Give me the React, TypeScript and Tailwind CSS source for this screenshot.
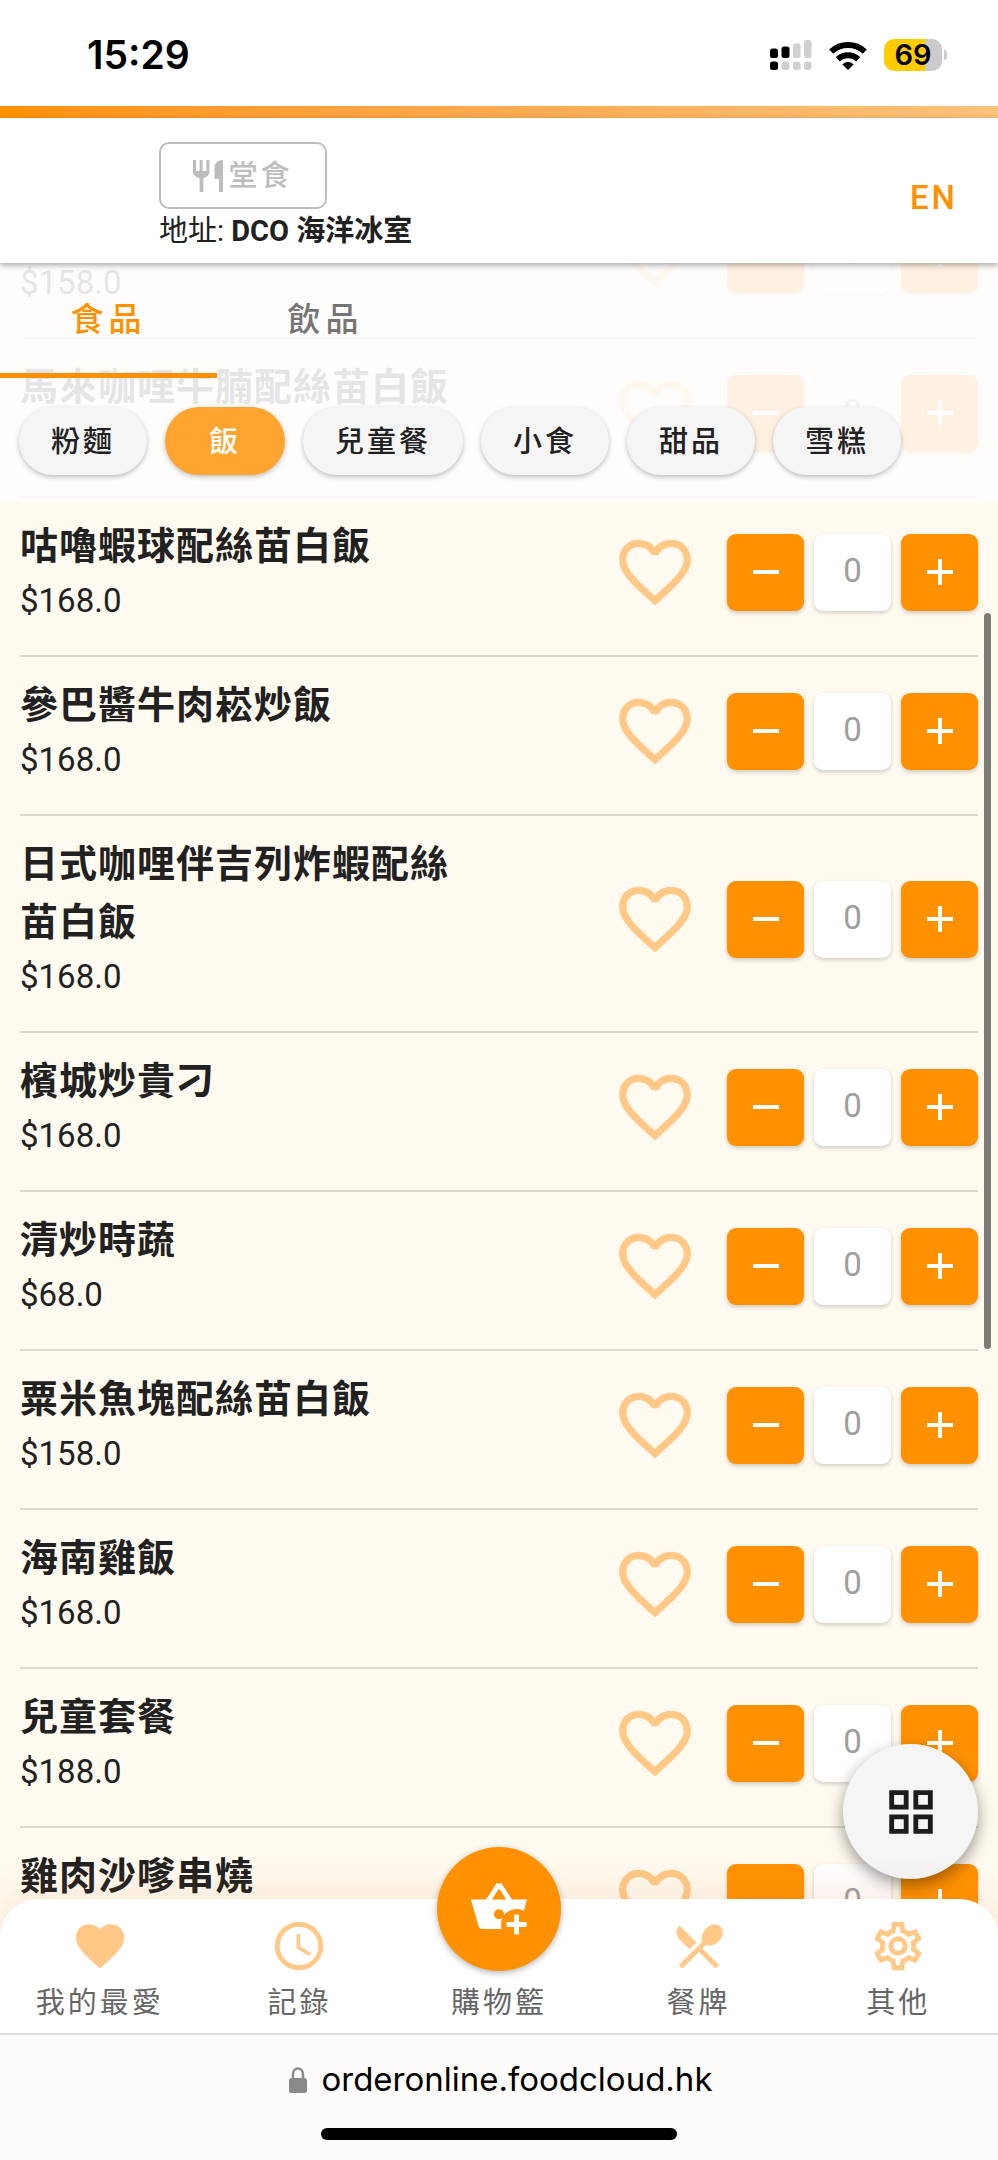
import { useLayoutEffect, useRef, useState } from 'react';

interface Dish {
    name: string;
    price: string;
}

const dishes: Dish[] = [
    { name: '沙嗲雞肉配絲苗白飯', price: '$158.0' },
    { name: '馬來咖哩牛腩配絲苗白飯', price: '$168.0' },
    { name: '咕嚕蝦球配絲苗白飯', price: '$168.0' },
    { name: '參巴醬牛肉崧炒飯', price: '$168.0' },
    { name: '日式咖哩伴吉列炸蝦配絲苗白飯', price: '$168.0' },
    { name: '檳城炒貴刁', price: '$168.0' },
    { name: '清炒時蔬', price: '$68.0' },
    { name: '粟米魚塊配絲苗白飯', price: '$158.0' },
    { name: '海南雞飯', price: '$168.0' },
    { name: '兒童套餐', price: '$188.0' },
    { name: '雞肉沙嗲串燒', price: '$88.0' },
];

const tabs = ['食品', '飲品'];
const categories = ['粉麵', '飯', '兒童餐', '小食', '甜品', '雪糕'];

const paths = {
    heart: 'M12,21.35L10.55,20.03C5.4,15.36 2,12.27 2,8.5C2,5.41 4.42,3 7.5,3C9.24,3 10.91,3.81 12,5.08C13.09,3.81 14.76,3 16.5,3C19.58,3 22,5.41 22,8.5C22,12.27 18.6,15.36 13.45,20.03L12,21.35Z',
    heartOutline:
        'M12.1,18.55L12,18.65L11.89,18.55C7.14,14.24 4,11.39 4,8.5C4,6.5 5.5,5 7.5,5C9.04,5 10.54,6 11.07,7.36H12.93C13.46,6 14.96,5 16.5,5C18.5,5 20,6.5 20,8.5C20,11.39 16.86,14.24 12.1,18.55M16.5,3C14.76,3 13.09,3.81 12,5.08C10.91,3.81 9.24,3 7.5,3C4.42,3 2,5.41 2,8.5C2,12.27 5.4,15.36 10.55,20.03L12,21.35L13.45,20.03C18.6,15.36 22,12.27 22,8.5C22,5.41 19.58,3 16.5,3Z',
    clock: 'M12,20A8,8 0 0,0 20,12A8,8 0 0,0 12,4A8,8 0 0,0 4,12A8,8 0 0,0 12,20M12,2A10,10 0 0,1 22,12A10,10 0 0,1 12,22C6.47,22 2,17.5 2,12A10,10 0 0,1 12,2M12.5,7V12.25L17,14.92L16.25,16.15L11,13V7H12.5Z',
    silverware:
        'M8.1,13.34L10.93,10.5L3.91,3.5C2.35,5.06 2.35,7.59 3.91,9.16L8.1,13.34M14.88,11.53C16.41,12.24 18.56,11.74 20.15,10.15C22.06,8.24 22.42,5.5 20.96,4.04C19.5,2.58 16.76,2.94 14.85,4.85C13.26,6.44 12.76,8.59 13.47,10.12L3.7,19.88L5.11,21.29L12,14.41L18.88,21.29L20.29,19.88L13.41,13L14.88,11.53Z',
    cog: 'M12,8A4,4 0 0,1 16,12A4,4 0 0,1 12,16A4,4 0 0,1 8,12A4,4 0 0,1 12,8M12,10A2,2 0 0,0 10,12A2,2 0 0,0 12,14A2,2 0 0,0 14,12A2,2 0 0,0 12,10M10,22C9.75,22 9.54,21.82 9.5,21.58L9.13,18.93C8.5,18.68 7.96,18.34 7.44,17.94L4.95,18.95C4.73,19.03 4.46,18.95 4.34,18.73L2.34,15.27C2.21,15.05 2.27,14.78 2.46,14.63L4.57,12.97L4.5,12L4.57,11L2.46,9.37C2.27,9.22 2.21,8.95 2.34,8.73L4.34,5.27C4.46,5.05 4.73,4.96 4.95,5.05L7.44,6.05C7.96,5.66 8.5,5.32 9.13,5.07L9.5,2.42C9.54,2.18 9.75,2 10,2H14C14.25,2 14.46,2.18 14.5,2.42L14.87,5.07C15.5,5.32 16.04,5.66 16.56,6.05L19.05,5.05C19.27,4.96 19.54,5.05 19.66,5.27L21.66,8.73C21.79,8.95 21.73,9.22 21.54,9.37L19.43,11L19.5,12L19.43,13L21.54,14.63C21.73,14.78 21.79,15.05 21.66,15.27L19.66,18.73C19.54,18.95 19.27,19.04 19.05,18.95L16.56,17.95C16.04,18.34 15.5,18.68 14.87,18.93L14.5,21.58C14.46,21.82 14.25,22 14,22H10M11.25,4L10.88,6.61C9.68,6.86 8.62,7.5 7.85,8.39L5.44,7.35L4.69,8.65L6.8,10.2C6.4,11.37 6.4,12.64 6.8,13.8L4.68,15.36L5.43,16.66L7.86,15.62C8.63,16.5 9.68,17.14 10.87,17.38L11.24,20H12.76L13.13,17.39C14.32,17.14 15.37,16.5 16.14,15.62L18.57,16.66L19.32,15.36L17.2,13.81C17.6,12.64 17.6,11.37 17.2,10.2L19.31,8.65L18.56,7.35L16.15,8.39C15.38,7.5 14.32,6.86 13.12,6.62L12.75,4H11.25Z',
    grid: 'M3 11H11V3H3M5 5H9V9H5M13 21H21V13H13M15 15H19V19H15M3 21H11V13H3M5 15H9V19H5M13 3V11H21V3M19 9H15V5H19Z',
};

function Icon({ path, className }: { path: string; className: string }) {
    return (
        <svg viewBox="0 0 24 24" fill="currentColor" fillRule="evenodd" className={className} aria-hidden="true">
            <path d={path} />
        </svg>
    );
}

function StatusBar() {
    return (
        <div className="flex h-[106px] shrink-0 items-center justify-between bg-white pl-[87px] pr-[51px] pt-1">
            <span className="font-['Inter'] text-[39px] font-semibold text-black">15:29</span>
            <div className="flex items-center gap-[17px]">
                <svg viewBox="0 0 42 30" className="h-[30px] w-[42px]" aria-label="訊號">
                    <g fill="#000">
                        <rect x="0" y="8.5" width="8" height="9.5" rx="2.5" />
                        <rect x="11.5" y="6.5" width="8" height="11.5" rx="2.5" />
                        <rect x="0" y="21.5" width="8" height="8.5" rx="2.5" />
                    </g>
                    <g fill="#d0d0d0">
                        <rect x="23" y="3.5" width="7.5" height="14.5" rx="2.5" />
                        <rect x="34" y="0" width="7.5" height="18" rx="2.5" />
                        <rect x="11.5" y="21.5" width="8" height="8.5" rx="3" />
                        <rect x="23" y="21.5" width="7.5" height="8.5" rx="3" />
                        <rect x="34" y="21.5" width="7.5" height="8.5" rx="3" />
                    </g>
                </svg>
                <svg viewBox="0 0 38 29" className="h-[29px] w-[38px]" fill="none" stroke="#000" strokeWidth="6" aria-label="Wi-Fi">
                    <path d="M2.2 10.6a24.5 24.5 0 0 1 33.6 0" />
                    <path d="M8.8 18.2a15 15 0 0 1 20.4 0" />
                    <path d="M19 29l-5.6-5.6a8 8 0 0 1 11.2 0z" fill="#000" stroke="none" />
                </svg>
                <div className="flex items-center gap-[2px]">
                    <div className="flex h-8 w-[58px] items-center justify-center rounded-[10px] bg-linear-to-r from-[#ffcc00] from-70% to-[#cbcbcb] to-70% font-['Inter'] text-[29px] font-semibold text-black">
                        69
                    </div>
                    <div className="h-[10px] w-[3px] rounded-r-full bg-[#cbcbcb]" />
                </div>
            </div>
        </div>
    );
}

function Header() {
    return (
        <header className="relative z-20 flex shrink-0 items-center justify-between bg-white pb-[10px] pl-[159px] pr-10 pt-6 shadow-[0_2px_6px_rgba(0,0,0,0.35)]">
            <div>
                <button
                    type="button"
                    className="flex h-[67px] w-[168px] items-center justify-center gap-[5px] rounded-[10px] border-2 border-[#bdbdbd] text-[29px] font-medium leading-[42px] tracking-[3px] text-[#bdbdbd]"
                >
                    <svg viewBox="0 0 30 32" fill="currentColor" className="h-8 w-[30px]" aria-hidden="true">
                        <path d="M0 0h3v11h3.6V0h3v11h3.8V0h3v11c0 4-2.4 6.200-6 7v14H6.600V18C2.600 17.200 0 15 0 11z" />
                        <path d="M30 0v32h-4V19h-4.500V8c0-4.500 3-8 8.500-8z" />
                    </svg>
                    堂食
                </button>
                <p className="text-[29px] leading-[44px] text-[#212121]">
                    地址: <strong className="font-bold">DCO 海洋冰室</strong>
                </p>
            </div>
            <button type="button" className="text-[33px] font-medium tracking-[3px] text-[#ff9100]">
                EN
            </button>
        </header>
    );
}

function DishRow({ dish }: { dish: Dish }) {
    const [qty, setQty] = useState(0);
    const stepButton =
        'flex size-[77px] items-center justify-center rounded-[9px] bg-[#ff9100] text-white shadow-[0_2px_4px_rgba(0,0,0,0.2)]';

    return (
        <li className="flex items-center border-b-2 border-[#ded9cf] pb-7 pt-[19px]">
            <div className="flex-1 pr-36 text-[#212121]">
                <h3 className="text-[38px] font-bold leading-[58px] tracking-[1px]">{dish.name}</h3>
                <p className="text-[33px] leading-[52px]">{dish.price}</p>
            </div>
            <button type="button" aria-label={`收藏 ${dish.name}`} className="mr-[29px] text-[#ffc886]">
                <Icon path={paths.heartOutline} className="size-[86px]" />
            </button>
            <div className="flex gap-[10px]">
                <button type="button" aria-label="減少" onClick={() => setQty(Math.max(0, qty - 1))} className={stepButton}>
                    <svg viewBox="0 0 26 26" stroke="currentColor" strokeWidth="4" className="size-[26px]">
                        <path d="M0 13h26" />
                    </svg>
                </button>
                <input
                    type="text"
                    aria-label={`${dish.name} 數量`}
                    value={qty}
                    readOnly
                    className="size-[77px] rounded-[9px] bg-white pb-1 text-center text-[33px] text-[#9e9e9e] shadow-[0_2px_4px_rgba(0,0,0,0.18)] outline-none"
                />
                <button type="button" aria-label="增加" onClick={() => setQty(qty + 1)} className={stepButton}>
                    <svg viewBox="0 0 26 26" stroke="currentColor" strokeWidth="4" className="size-[26px]">
                        <path d="M0 13h26M13 0v26" />
                    </svg>
                </button>
            </div>
        </li>
    );
}

function MenuFilters() {
    const [tab, setTab] = useState('食品');
    const [category, setCategory] = useState('飯');

    return (
        <div className="absolute inset-x-0 top-0 z-10 bg-[#fffdfd]/89 pb-7">
            <div className="flex">
                {tabs.map((t) => (
                    <button
                        key={t}
                        type="button"
                        onClick={() => setTab(t)}
                        className={`h-[115px] w-[217px] border-b-[5px] pt-[3px] text-[33px] font-medium tracking-[5px] ${
                            t === tab ? 'border-[#ff9100] text-[#ff9100]' : 'border-transparent text-[#757575]'
                        }`}
                    >
                        {t}
                    </button>
                ))}
            </div>
            <div className="flex gap-[18px] px-[19px] pt-[29px]">
                {categories.map((c) => (
                    <button
                        key={c}
                        type="button"
                        onClick={() => setCategory(c)}
                        className={`h-[68px] min-w-[120px] rounded-full px-8 pt-[3px] text-[29px] font-medium tracking-[3px] shadow-[0_2px_5px_rgba(0,0,0,0.25)] ${
                            c === category ? 'bg-[#ffa52f] text-white' : 'bg-[#f5f5f5] text-[#212121]'
                        }`}
                    >
                        {c}
                    </button>
                ))}
            </div>
        </div>
    );
}

function BasketIcon() {
    return (
        <svg viewBox="0 0 60 60" className="size-[60px]" aria-hidden="true">
            <path d="M30 5L19 22M30 5l11 17" fill="none" stroke="#fff" strokeWidth="5" strokeLinejoin="round" />
            <path d="M2 20.500h56L50.500 47c-.6 2-1.800 3-4 3h-33c-2.200 0-3.400-1-4-3z" fill="#fff" />
            <circle cx="30" cy="35.300" r="5" fill="#ff9100" />
            <circle cx="47.500" cy="45.500" r="15.500" fill="#ff9100" />
            <path d="M37.500 45.500h20M47.500 35.500v20" stroke="#fff" strokeWidth="5" />
        </svg>
    );
}

function BottomNav() {
    const item = 'flex flex-1 flex-col items-center gap-2 text-[29px] leading-[40px] tracking-[3px] text-[#666]';
    const icon = 'size-[58px] text-[#ffc886]';

    return (
        <nav className="absolute inset-x-0 bottom-0 z-20 flex rounded-t-[38px] bg-white pb-[10px] pt-[18px] shadow-[0_-4px_40px_rgba(200,110,60,0.16)]">
            <a href="#favourites" className={item}>
                <Icon path={paths.heart} className={icon} />
                我的最愛
            </a>
            <a href="#history" className={item}>
                <Icon path={paths.clock} className={icon} />
                記錄
            </a>
            <a href="#basket" className={`relative ${item}`}>
                <span className="absolute top-[-70px] flex size-[124px] items-center justify-center rounded-full bg-[#ff9100] shadow-[0_2px_6px_rgba(0,0,0,0.3)]">
                    <BasketIcon />
                </span>
                <span className="pt-[66px]">購物籃</span>
            </a>
            <a href="#menu" className={item}>
                <Icon path={paths.silverware} className={icon} />
                餐牌
            </a>
            <a href="#others" className={item}>
                <Icon path={paths.cog} className={icon} />
                其他
            </a>
        </nav>
    );
}

function AddressBar() {
    return (
        <footer className="relative z-20 flex shrink-0 flex-col items-center border-t-2 border-[#dedede] bg-[#fefcfb] pb-5 pt-[23px]">
            <div className="flex h-[44px] items-center gap-[14px] pl-1 font-['Inter'] text-[33px] text-black">
                <svg viewBox="0 0 18 26" className="h-[26px] w-[18px]" aria-hidden="true">
                    <path d="M4 12V7a5 5.500 0 0 1 10 0v5" fill="none" stroke="#8a8a8a" strokeWidth="2.500" />
                    <rect y="11" width="18" height="15" rx="2.500" fill="#8a8a8a" />
                </svg>
                orderonline.foodcloud.hk
            </div>
            <div className="mt-[26px] h-3 w-[356px] rounded-full bg-black" />
        </footer>
    );
}

export default function App() {
    const listRef = useRef<HTMLDivElement>(null);

    // open the list part way down, at the rice section
    useLayoutEffect(() => {
        if (listRef.current) listRef.current.scrollTop = 83;
    }, []);

    return (
        <div className="flex h-screen flex-col overflow-hidden bg-[#fffaef] font-[Roboto,'Noto_Sans_CJK_TC',sans-serif]">
            <StatusBar />
            <div className="h-3 shrink-0 bg-linear-to-r from-[#ff9100] to-[#ffc27a]" />
            <Header />
            <main className="relative min-h-0 flex-1">
                <div ref={listRef} className="h-full overflow-y-auto [scrollbar-width:none]">
                    <ul className="px-5 pb-48">
                        {dishes.map((dish) => (
                            <DishRow key={dish.name} dish={dish} />
                        ))}
                    </ul>
                </div>
                <MenuFilters />
                <div className="absolute right-[7px] top-[350px] z-10 h-[736px] w-[7px] rounded-full bg-[#7d7b76]" />
                <button
                    type="button"
                    aria-label="分類"
                    className="absolute bottom-[154px] right-5 z-10 flex size-[135px] items-center justify-center rounded-full bg-[#f5f5f5] text-[#1c1c1c] shadow-[0_6px_16px_rgba(0,0,0,0.4)]"
                >
                    <Icon path={paths.grid} className="size-[58px]" />
                </button>
                <BottomNav />
            </main>
            <AddressBar />
        </div>
    );
}
